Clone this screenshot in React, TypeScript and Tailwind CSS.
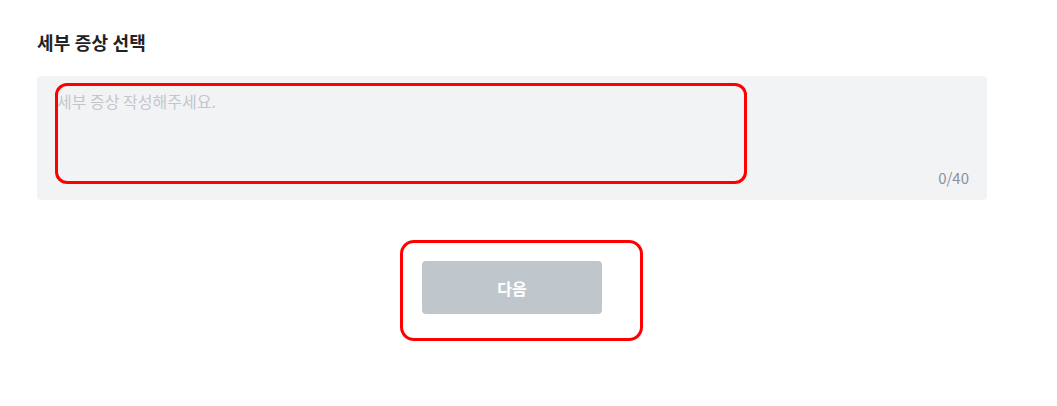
import { useState } from "react";

const font = { fontFamily: '"Noto Sans CJK KR", "Noto Sans", sans-serif' };

export default function App() {
  const [text, setText] = useState("");
  const max = 40;

  return (
    <div className="min-h-screen w-full bg-white" style={font}>
      <div className="flex w-[987px] flex-col pl-[37px] pt-[28px]">
        <h2 className="text-[18px] font-bold leading-[28px] tracking-[0.2px] text-[#222222]">
          세부 증상 선택
        </h2>

        <div className="relative mt-[20px] flex h-[124px] flex-col rounded-[4px] bg-[#f2f3f5] pb-[12px] pl-[20px] pr-[18px] pt-[13px]">
          <textarea
            value={text}
            maxLength={max}
            onChange={(e) => setText(e.target.value)}
            placeholder="세부 증상 작성해주세요."
            className="flex-1 resize-none bg-transparent text-[16px] leading-[24px] text-[#333] outline-none placeholder:text-[#c3c7cc]"
            style={font}
          />
          <span className="self-end text-[15px] leading-[20px] text-[#8b9199]">
            {text.length}/{max}
          </span>

          <div className="pointer-events-none absolute left-[18px] top-[7px] h-[101px] w-[692px] rounded-[12px] border-[3px] border-[#ff0000]" />
        </div>

        <div className="mt-[61px] flex justify-center">
          <div className="relative">
            <button
              disabled
              className="h-[53px] w-[180px] rounded-[4px] bg-[#c0c7cc] text-[16px] font-bold text-white"
              style={font}
            >
              다음
            </button>
            <div className="pointer-events-none absolute left-[-22px] top-[-21px] h-[101px] w-[243px] rounded-[14px] border-[3px] border-[#ff0000]" />
          </div>
        </div>
      </div>
    </div>
  );
}
